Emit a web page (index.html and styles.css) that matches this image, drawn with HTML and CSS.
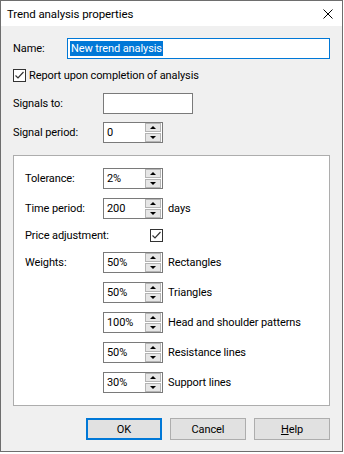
FILE: index.html
```html
<!DOCTYPE html>
<html>

<head>
  <title>Trend analysis properties</title>
  <link rel="stylesheet" href="styles.css">
</head>

<body>
  <div class="dialog">
    <div class="titlebar">
      <span class="title">Trend analysis properties</span>
      <svg class="close" width="10" height="10" viewBox="0 0 10 10">
        <path d="M0.5 0.5 L9.5 9.5 M9.5 0.5 L0.5 9.5" stroke="#000" stroke-width="1" fill="none"/>
      </svg>
    </div>

    <div class="content">
      <!-- Top fields -->
      <div class="row name-row">
        <span class="label name-label">Name:</span>
        <div class="textbox name-box"><span class="selected">New trend analysis</span></div>
      </div>

      <div class="row check-row">
        <span class="checkbox">
          <svg width="11" height="11" viewBox="0 0 11 11"><path d="M1.5 5.5 L4 8 L9.5 2" stroke="#333" stroke-width="1.2" fill="none"/></svg>
        </span>
        <span class="check-label">Report upon completion of analysis</span>
      </div>

      <div class="row signals-row">
        <span class="label">Signals to:</span>
        <div class="textbox signals-box"></div>
      </div>

      <div class="row period-row">
        <span class="label">Signal period:</span>
        <div class="spin">
          <span class="spin-value">0</span>
          <span class="spin-buttons"><span class="spin-btn up"></span><span class="spin-btn down"></span></span>
        </div>
      </div>

      <!-- Trend parameters -->
      <div class="group">
        <div class="row">
          <span class="label group-label">Tolerance:</span>
          <div class="spin">
            <span class="spin-value">2%</span>
            <span class="spin-buttons"><span class="spin-btn up"></span><span class="spin-btn down"></span></span>
          </div>
        </div>

        <div class="row">
          <span class="label group-label">Time period:</span>
          <div class="spin">
            <span class="spin-value">200</span>
            <span class="spin-buttons"><span class="spin-btn up"></span><span class="spin-btn down"></span></span>
          </div>
          <span class="unit">days</span>
        </div>

        <div class="row price-row">
          <span class="label group-label">Price adjustment:</span>
          <span class="checkbox price-check">
            <svg width="11" height="11" viewBox="0 0 11 11"><path d="M1.5 5.5 L4 8 L9.5 2" stroke="#333" stroke-width="1.2" fill="none"/></svg>
          </span>
        </div>

        <div class="row weights-row">
          <span class="label group-label">Weights:</span>
          <div class="spin">
            <span class="spin-value">50%</span>
            <span class="spin-buttons"><span class="spin-btn up"></span><span class="spin-btn down"></span></span>
          </div>
          <span class="unit">Rectangles</span>
        </div>

        <div class="row">
          <span class="label group-label"></span>
          <div class="spin">
            <span class="spin-value">50%</span>
            <span class="spin-buttons"><span class="spin-btn up"></span><span class="spin-btn down"></span></span>
          </div>
          <span class="unit">Triangles</span>
        </div>

        <div class="row">
          <span class="label group-label"></span>
          <div class="spin">
            <span class="spin-value">100%</span>
            <span class="spin-buttons"><span class="spin-btn up"></span><span class="spin-btn down"></span></span>
          </div>
          <span class="unit">Head and shoulder patterns</span>
        </div>

        <div class="row">
          <span class="label group-label"></span>
          <div class="spin">
            <span class="spin-value">50%</span>
            <span class="spin-buttons"><span class="spin-btn up"></span><span class="spin-btn down"></span></span>
          </div>
          <span class="unit">Resistance lines</span>
        </div>

        <div class="row">
          <span class="label group-label"></span>
          <div class="spin">
            <span class="spin-value">30%</span>
            <span class="spin-buttons"><span class="spin-btn up"></span><span class="spin-btn down"></span></span>
          </div>
          <span class="unit">Support lines</span>
        </div>
      </div>

      <!-- Dialog buttons -->
      <div class="buttons">
        <button class="btn default">OK</button>
        <button class="btn">Cancel</button>
        <button class="btn"><u>H</u>elp</button>
      </div>
    </div>
  </div>
</body>

</html>
```

FILE: styles.css
```css
/* Page reset */
body {
  margin: 0;
  padding: 0;
  background: #fff;
  font-family: Roboto, 'Liberation Sans', sans-serif;
  font-size: 11px;
  letter-spacing: -0.1px;
  color: #000;
  white-space: nowrap;
}

/* Dialog window frame */
.dialog {
  width: 341px;
  height: 450px;
  border: 1px solid #6e6e6e;
  background: #f0f0f0;
  display: flex;
  flex-direction: column;
}

/* Title bar */
.titlebar {
  height: 25px;
  background: #fff;
  display: flex;
  align-items: center;
  justify-content: space-between;
  padding: 0 9px 0 6px;
}

.title {
  font-size: 11.5px;
}

.close {
  display: block;
}

/* Client area */
.content {
  padding: 12px 12px 0 12px;
  display: flex;
  flex-direction: column;
}

.row {
  display: flex;
  align-items: center;
  height: 21px;
}

.label {
  width: 90px;
  flex-shrink: 0;
}

.name-label {
  width: 54px;
}

/* Text boxes */
.textbox {
  height: 19px;
  border: 1px solid #7a7a7a;
  background: #fff;
  display: flex;
  align-items: center;
}

.name-box {
  width: 262px;
  border-color: #0078d7;
}

.selected {
  background: #0078d7;
  color: #fff;
  margin-left: 2px;
  padding: 0 1px;
  line-height: 15px;
}

.signals-box {
  width: 88px;
}

/* Check boxes */
.check-row {
  height: 14px;
  margin-top: 9px;
}

.checkbox {
  width: 11px;
  height: 11px;
  border: 1px solid #333;
  background: #fff;
  display: flex;
  align-items: center;
  justify-content: center;
  flex-shrink: 0;
}

.check-label {
  margin-left: 3px;
}

.signals-row {
  margin-top: 11px;
}

.period-row {
  margin-top: 8px;
}

/* Spin boxes */
.spin {
  width: 58px;
  height: 19px;
  border: 1px solid #7a7a7a;
  background: #fff;
  display: flex;
  align-items: center;
  justify-content: space-between;
  flex-shrink: 0;
}

.spin-value {
  padding-left: 3px;
}

.spin-buttons {
  display: flex;
  flex-direction: column;
  gap: 1px;
  margin-right: 1px;
}

.spin-btn {
  width: 14px;
  height: 7px;
  border: 1px solid #b4b4b4;
  background: #e6e6e6;
  position: relative;
}

.spin-btn::after {
  content: "";
  position: absolute;
  left: 4px;
  width: 0;
  height: 0;
  border-left: 3px solid transparent;
  border-right: 3px solid transparent;
}

.spin-btn.up::after {
  top: 2px;
  border-bottom: 3px solid #000;
}

.spin-btn.down::after {
  top: 2px;
  border-top: 3px solid #000;
}

.unit {
  margin-left: 5px;
}

/* Group box */
.group {
  margin-top: 12px;
  height: 225px;
  border: 1px solid #adadad;
  background: #fff;
  padding: 12px 11px 12px 11px;
  display: flex;
  flex-direction: column;
  gap: 9px;
}

.group-label {
  width: 78px;
}

.price-row {
  height: 14px;
}

.price-check {
  margin-left: 47px;
}

.weights-row {
  margin-top: 1px;
}

/* Bottom buttons */
.buttons {
  display: flex;
  justify-content: flex-end;
  gap: 8px;
  margin-top: 12px;
}

.btn {
  width: 76px;
  height: 22px;
  border: 1px solid #adadad;
  background: #e1e1e1;
  font-family: inherit;
  font-size: 11px;
  letter-spacing: -0.1px;
  color: #000;
  padding: 0;
}

.btn.default {
  border: 2px solid #0078d7;
}
```
